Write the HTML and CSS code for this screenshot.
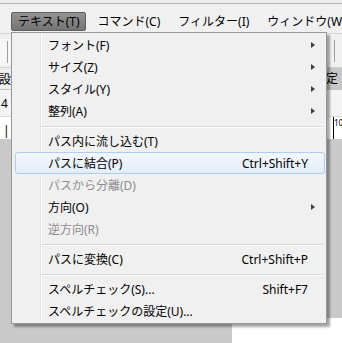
FILE: index.html
```html
<!DOCTYPE html>
<html lang="ja">
<head>
    <meta charset="UTF-8">
    <title>テキスト メニュー</title>
    <link rel="stylesheet" href="styles.css">
</head>
<body>
<div class="app">
    <div class="topline"></div>
    <div class="menubar">
        <span class="bar-item active">テキスト(T)</span>
        <span class="bar-item">コマンド(C)</span>
        <span class="bar-item">フィルター(I)</span>
        <span class="bar-item">ウィンドウ(W)</span>
    </div>
    <div class="toolbar">
        <div class="tool-left"><span class="grip"></span></div>
        <div class="tool-right"><span class="grip"></span></div>
    </div>
    <div class="tabs">
        <span class="tab-left">定設</span>
        <span class="tab-right">定</span>
    </div>
    <div class="fields">
        <span class="field-left">4</span>
    </div>
    <div class="ruler">
        <span class="ruler-left">|</span>
        <span class="ruler-right">10</span>
    </div>
    <div class="workspace">
        <div class="corner"></div>
    </div>

    <div class="dropdown">
        <div class="gutter"></div>
        <div class="item"><span class="label">フォント(F)</span><span class="arrow"></span></div>
        <div class="item"><span class="label">サイズ(Z)</span><span class="arrow"></span></div>
        <div class="item"><span class="label">スタイル(Y)</span><span class="arrow"></span></div>
        <div class="item"><span class="label">整列(A)</span><span class="arrow"></span></div>
        <div class="sep"></div>
        <div class="item"><span class="label">パス内に流し込む(T)</span></div>
        <div class="item hover"><span class="label">パスに結合(P)</span><span class="key">Ctrl+Shift+Y</span></div>
        <div class="item disabled"><span class="label">パスから分離(D)</span></div>
        <div class="item"><span class="label">方向(O)</span><span class="arrow"></span></div>
        <div class="item disabled"><span class="label">逆方向(R)</span></div>
        <div class="sep"></div>
        <div class="item"><span class="label">パスに変換(C)</span><span class="key">Ctrl+Shift+P</span></div>
        <div class="sep"></div>
        <div class="item"><span class="label">スペルチェック(S)...</span><span class="key">Shift+F7</span></div>
        <div class="item"><span class="label">スペルチェックの設定(U)...</span></div>
    </div>
</div>
</body>
</html>
```

FILE: styles.css
```css
html, body {
    margin: 0;
    padding: 0;
}

body {
    font-family: "Noto Sans", "Noto Sans CJK JP", sans-serif;
    font-size: 12px;
    color: #000;
    background-color: #fff;
}

.app {
    position: relative;
    width: 342px;
    height: 343px;
    overflow: hidden;
    display: flex;
    flex-direction: column;
}

.topline {
    height: 3px;
    background-color: #ececec;
    border-bottom: 1px solid #b4b4b4;
}

.menubar {
    height: 30px;
    box-sizing: border-box;
    padding: 0 0 2px 11px;
    display: flex;
    align-items: flex-end;
    background-color: #f0f0f0;
    border-bottom: 1px solid #d6d6d6;
    white-space: nowrap;
}

.bar-item {
    height: 19px;
    line-height: 19px;
    padding: 0 11px 0 7px;
    box-sizing: border-box;
}

.bar-item.active {
    background: linear-gradient(#929292, #747474);
    border: 1px solid #5e5e5e;
    border-radius: 2px;
    padding: 0 5px 0 6px;
    line-height: 17px;
    margin-right: 5px;
}

.toolbar {
    height: 33px;
    display: flex;
    justify-content: space-between;
    background-color: #f0f0f0;
    border-bottom: 1px solid #d2d2d2;
}

.tool-left, .tool-right {
    width: 15px;
    display: flex;
    justify-content: center;
    align-items: center;
}

.tool-left {
    background-color: #f7f7f7;
    margin: 5px 0 2px;
}

.grip {
    width: 1px;
    height: 22px;
    background-color: #a0a0a0;
}

.tabs {
    height: 21px;
    display: flex;
    justify-content: space-between;
    align-items: center;
    background-color: #eeeeee;
    border-bottom: 1px solid #c4c4c4;
    overflow: hidden;
}

.tab-left {
    margin-left: -13px;
}

.tab-right {
    width: 16px;
    height: 100%;
    line-height: 21px;
    background-color: #c6c6c6;
    border-left: 1px solid #8c8c8c;
}

.fields {
    height: 26px;
    display: flex;
    align-items: center;
    background-color: #f4f4f4;
    border-bottom: 1px solid #dadada;
}

.field-left {
    margin-left: 1px;
}

.ruler {
    height: 22px;
    display: flex;
    justify-content: space-between;
    align-items: flex-end;
    background-color: #fff;
}

.ruler-left {
    margin-left: 3px;
}

.ruler-right {
    width: 8px;
    height: 100%;
    font-size: 8px;
    border-left: 1px solid #000;
}

.workspace {
    flex: 1;
    background-color: #c9c9c9;
    display: flex;
    flex-direction: column;
    justify-content: flex-end;
    align-items: flex-end;
}

.corner {
    width: 110px;
    height: 25px;
    background-color: #fff;
}

/* dropdown menu drawn over the window */
.dropdown {
    position: absolute;
    left: 11px;
    top: 32px;
    width: 316px;
    box-sizing: border-box;
    padding: 1px 1px 1px 2px;
    background-color: #f0f0f0;
    border: 1px solid #979797;
    box-shadow: 3px 3px 2px rgba(0, 0, 0, 0.35);
}

.gutter {
    position: absolute;
    left: 28px;
    top: 1px;
    bottom: 1px;
    width: 1px;
    background-color: #e2e3e3;
    border-right: 1px solid #fff;
}

.item {
    position: relative;
    height: 22px;
    display: flex;
    align-items: center;
    padding: 0 0 0 32px;
    margin: 0 0 0 1px;
    border: 1px solid transparent;
    box-sizing: border-box;
    border-radius: 3px;
}

.item .label {
    flex: 1;
    white-space: nowrap;
}

.item .key {
    margin-right: 16px;
    white-space: nowrap;
}

.item .arrow {
    width: 0;
    height: 0;
    margin-right: 9px;
    border-left: 4px solid #3c3c3c;
    border-top: 3.5px solid transparent;
    border-bottom: 3.5px solid transparent;
}

.item.hover {
    background: linear-gradient(#f4f8fd, #e3edfa);
    border-color: #aecdf2;
}

.item.disabled {
    color: #8d8d8d;
}

.sep {
    height: 8px;
    margin-left: 28px;
    box-sizing: border-box;
    padding-top: 4px;
}

.sep::after {
    content: "";
    display: block;
    height: 1px;
    background-color: #d7d7d7;
    border-bottom: 1px solid #fff;
    margin-right: 3px;
}
```
